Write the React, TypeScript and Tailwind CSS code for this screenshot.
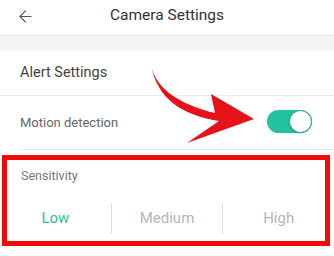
import { ArrowLeft } from 'lucide-react';

export default function App() {
  return (
    <div className="relative w-[334px] h-[256px] bg-white overflow-hidden" style={{ fontFamily: 'Roboto, "Noto Sans", sans-serif' }}>
      {/* Header */}
      <div className="relative flex items-center justify-center h-[36px] border-b border-[#e2e2e2]">
        <ArrowLeft className="absolute left-[16px] top-[7px]" size={19} strokeWidth={1.4} color="#555" />
        <span className="text-[15.5px] text-[#333] leading-none pb-[3px]">Camera Settings</span>
      </div>
      <div className="h-[14px] bg-[#f5f5f5]" />

      {/* Alert settings */}
      <div className="flex items-center h-[46px] px-5 border-b border-[#ececec]">
        <span className="text-[14.5px] text-[#444]">Alert Settings</span>
      </div>

      {/* Motion detection */}
      <div className="flex items-center justify-between h-[53px] pl-5 pr-[22px]">
        <span className="text-[13px] text-[#666]">Motion detection</span>
        <div className="flex justify-end w-[45px] h-[23px] rounded-full bg-[#22c2a3] mb-[3px]">
          <div className="w-[23px] h-[23px] rounded-full bg-white border border-[#1ba389] shadow-sm" />
        </div>
      </div>
      <div className="ml-5 border-b border-[#ececec]" />

      {/* Sensitivity */}
      <div className="mt-[5px] mx-[2px] w-[328px] h-[91px] border-[5px] border-[#f20a0a] px-[6px]">
        <div className="pt-[8px] pl-[8px] text-[12.5px] text-[#777] leading-[16px]">Sensitivity</div>
        <div className="flex items-center mt-[19px] -mx-[13px] w-[334px]">
          <div className="flex-1 flex items-center justify-center h-[31px] text-[15px] text-[#2bbf9f]">Low</div>
          <div className="flex-1 flex items-center justify-center h-[31px] text-[15px] text-[#b5b5b5] border-l border-[#dcdcdc]">Medium</div>
          <div className="flex-1 flex items-center justify-center h-[31px] text-[15px] text-[#b5b5b5] border-l border-[#dcdcdc]">High</div>
        </div>
      </div>

      {/* Red annotation arrow */}
      <svg className="absolute left-0 top-0 pointer-events-none" width="334" height="256" viewBox="0 0 334 256">
        <path
          d="M151,65 C155,88 180,105 215,113 L211,94 L254,119 L187,143 L219,121 C181,115 157,98 151,65 Z"
          fill="#e6121a"
        />
      </svg>
    </div>
  );
}
